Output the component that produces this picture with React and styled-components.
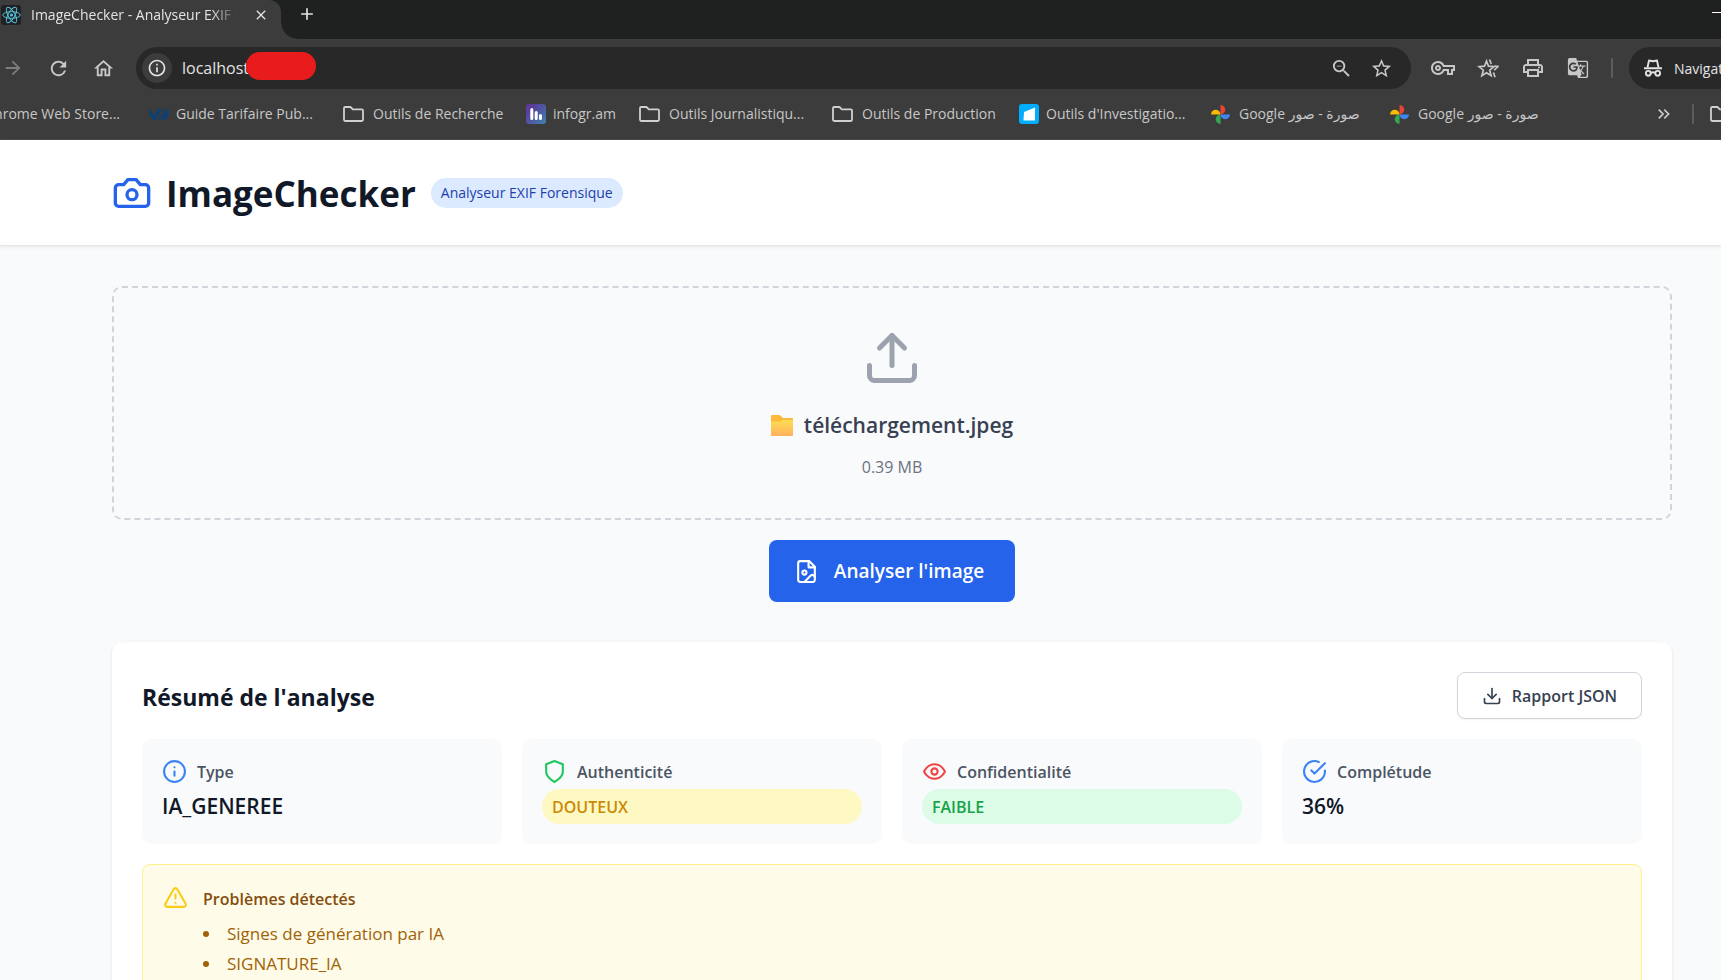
import React from "react";
import styled, { createGlobalStyle } from "styled-components";
import {
  MdArrowForward, MdRefresh, MdOutlineHome, MdOutlineInfo, MdZoomOut, MdStarOutline,
  MdOutlineVpnKey, MdOutlinePrint, MdGTranslate, MdClose, MdAdd, MdKeyboardDoubleArrowRight,
} from "react-icons/md";
import { Download, Upload } from "lucide-react";

const GlobalStyle = createGlobalStyle`
  *, *::before, *::after { box-sizing: border-box; }
  body {
    margin: 0;
    background: #f9fafb;
    font-family: "Open Sans", "Noto Sans", "DejaVu Sans", sans-serif;
    color: #111827;
  }
  h1, h2, h3, p, ul { margin: 0; padding: 0; }
  button, input { font: inherit; color: inherit; }
  button { padding: 0; border: 0; background: none; cursor: pointer; }
  svg { display: block; flex: none; }
`;

const Page = styled.div`
  height: 100vh;
  overflow: hidden;
`;

/* ---------- browser window ---------- */

const TabStrip = styled.div`
  display: flex;
  height: 39px;
  background: #1f2120;
  color: #e3e3e3;
`;

const Tab = styled.div`
  position: relative;
  display: flex;
  align-items: center;
  width: 281px;
  height: 39px;
  padding: 0 12px 10px 1px;
  background: #3c3c3c;
  border-top-right-radius: 12px;

  &::after {
    content: "";
    position: absolute;
    left: 100%;
    bottom: 0;
    width: 16px;
    height: 16px;
    background: radial-gradient(circle at 100% 0, transparent 15px, #3c3c3c 16px);
  }
`;

const Favicon = styled.span`
  display: grid;
  place-items: center;
  width: 20px;
  height: 20px;
  border-radius: 3px;
  background: #202124;
`;

const TabTitle = styled.span`
  flex: 1;
  margin: 0 16px 0 10px;
  overflow: hidden;
  white-space: nowrap;
  font-size: 14px;
  line-height: 20px;
  mask-image: linear-gradient(to right, #000 88%, transparent 100%);
`;

const StripButton = styled.button`
  display: grid;
  place-items: center;
  width: 16px;
  height: 28px;
`;

const NewTab = styled(StripButton)`
  width: 52px;
`;

const Minimise = styled(StripButton)`
  width: 9px;
  height: 24px;
  margin-left: auto;

  &::after {
    content: "";
    width: 9px;
    height: 1px;
    background: #fff;
  }
`;

const Toolbar = styled.div`
  display: flex;
  align-items: center;
  height: 50px;
  padding-top: 8px;
  background: #3c3c3c;
  color: #c7c7c7;
`;

const NavButtons = styled.div`
  display: flex;
  gap: 21px;
  width: 136px;
  padding-left: 1px;
`;

const IconButton = styled.button`
  display: grid;
  place-items: center;
  flex: none;
  width: 24px;
  height: 24px;
  color: ${(p) => (p.$dim ? "#7d7d7d" : "#c7c7c7")};
`;

const Omnibox = styled.div`
  position: relative;
  display: flex;
  align-items: center;
  flex: 1;
  gap: 16px;
  height: 42px;
  padding: 0 18px 0 6px;
  border-radius: 21px;
  background: #282828;
`;

const SiteInfo = styled.button`
  display: grid;
  place-items: center;
  width: 30px;
  height: 30px;
  margin-right: -6px;
  border-radius: 50%;
  background: #3c3c3c;
  color: #e3e3e3;
`;

const Address = styled.input`
  flex: 1;
  min-width: 0;
  padding: 0;
  border: 0;
  outline: 0;
  background: none;
  color: #e3e3e3;
  font-size: 16px;
  line-height: 24px;
`;

const Redaction = styled.span`
  position: absolute;
  top: 5px;
  left: 110px;
  width: 70px;
  height: 28px;
  border-radius: 14px;
  background: #e81c1c;
`;

const Extensions = styled.div`
  display: flex;
  align-items: center;
  gap: 21px;
  padding: 0 16px 0 20px;
`;

const Divider = styled.span`
  flex: none;
  width: 2px;
  height: 20px;
  border-radius: 1px;
  background: #5c5c5c;
`;

const Incognito = styled.button`
  display: flex;
  align-items: center;
  gap: 11px;
  width: 92px;
  height: 42px;
  padding-left: 14px;
  overflow: hidden;
  border-radius: 21px 0 0 21px;
  background: #282828;
  color: #e3e3e3;
  font-size: 14px;
  white-space: nowrap;
`;

const BookmarksBar = styled.nav`
  display: flex;
  align-items: center;
  height: 51px;
  border-bottom: 1px solid #4b4b4b;
  overflow: hidden;
  background: #3c3c3c;
  color: #c7c7c7;
`;

const Bookmark = styled.a`
  display: flex;
  align-items: center;
  flex: none;
  gap: ${(p) => p.$gap || 7}px;
  width: ${(p) => p.$slot}px;
  color: inherit;
  font-size: 14px;
  line-height: 20px;
  text-decoration: none;
  white-space: nowrap;
`;

const CutBookmark = styled(Bookmark)`
  justify-content: flex-end;
  padding-right: 29px;
`;

const BookmarksEnd = styled.div`
  display: flex;
  align-items: center;
  gap: 16px;
  width: 69px;
  margin-left: auto;
  overflow: hidden;
`;

/* ---------- application ---------- */

const Header = styled.header`
  display: flex;
  align-items: center;
  height: 106px;
  padding: 0 49px 0 112px;
  border-bottom: 1px solid #e5e7eb;
  background: #fff;
  box-shadow: 0 1px 3px rgba(0, 0, 0, 0.08);
`;

const Brand = styled.h1`
  margin: 0 15px 0 14px;
  padding-top: 2px;
  font-size: 35px;
  font-weight: 700;
  line-height: 44px;
`;

const Tag = styled.span`
  padding: 0 10px;
  border-radius: 15px;
  background: #dbeafe;
  color: #1e40af;
  font-size: 14px;
  line-height: 30px;
`;

const Main = styled.main`
  display: flex;
  flex-direction: column;
  align-items: center;
  padding: 40px 49px 0 112px;
`;

const DropZone = styled.label`
  display: flex;
  flex-direction: column;
  align-items: center;
  width: 100%;
  height: 234px;
  padding-top: 40px;
  border: 2px dashed #d1d5db;
  border-radius: 10px;
  cursor: pointer;
`;

const FileInput = styled.input`
  position: absolute;
  width: 1px;
  height: 1px;
  opacity: 0;
`;

const FileName = styled.span`
  display: flex;
  align-items: center;
  gap: 11px;
  margin-top: 20px;
  color: #374151;
  font-size: 21px;
  font-weight: 600;
  line-height: 35px;
`;

const FileSize = styled.span`
  margin-top: 10px;
  color: #6b7280;
  font-size: 16px;
  line-height: 28px;
`;

const AnalyseButton = styled.button`
  display: flex;
  align-items: center;
  gap: 15px;
  height: 62px;
  margin: 20px 0 40px;
  padding: 0 31px 0 25px;
  border-radius: 8px;
  background: #2563eb;
  color: #fff;
  font-size: 19px;
  font-weight: 600;
`;

const Card = styled.section`
  width: 100%;
  padding: 30px;
  border-radius: 10px;
  background: #fff;
  box-shadow: 0 1px 3px rgba(0, 0, 0, 0.1);
`;

const CardHead = styled.div`
  display: flex;
  align-items: center;
  justify-content: space-between;
  height: 47px;
`;

const CardTitle = styled.h2`
  padding-top: 2px;
  font-size: 23px;
  font-weight: 700;
  line-height: 36px;
`;

const ReportButton = styled.button`
  display: flex;
  align-items: center;
  justify-content: center;
  gap: 10px;
  min-width: 185px;
  height: 47px;
  border: 1px solid #d1d5db;
  border-radius: 8px;
  background: #fff;
  box-shadow: 0 1px 2px rgba(0, 0, 0, 0.05);
  color: #374151;
  font-size: 16px;
  font-weight: 600;
`;

const Tiles = styled.div`
  display: grid;
  grid-template-columns: repeat(4, 1fr);
  gap: 20px;
  margin: 20px 0;
`;

const Tile = styled.div`
  height: 105px;
  padding: 20px;
  border-radius: 10px;
  background: #f9fafb;
`;

const TileLabel = styled.div`
  display: flex;
  gap: 10px;
  height: 25px;
  color: #4b5563;
  font-size: 16px;
  font-weight: 600;
  line-height: 27px;
`;

const TileValue = styled.p`
  margin-top: 5px;
  font-size: 21px;
  font-weight: 600;
  line-height: 35px;
`;

const TONES = {
  yellow: { ink: "#ca8a04", fill: "#fef9c3" },
  green: { ink: "#16a34a", fill: "#dcfce7" },
};

const Pill = styled.p`
  margin-top: 5px;
  padding: 1px 10px 0;
  border-radius: 18px;
  background: ${(p) => TONES[p.$tone].fill};
  color: ${(p) => TONES[p.$tone].ink};
  font-size: 16px;
  font-weight: 600;
  line-height: 34px;
`;

const Alert = styled.div`
  display: flex;
  gap: 15px;
  padding: 20px;
  border: 1px solid #fef08a;
  border-radius: 8px;
  background: #fefce8;
`;

const AlertTitle = styled.h3`
  color: #854d0e;
  font-size: 16px;
  font-weight: 600;
  line-height: 28px;
`;

const IssueList = styled.ul`
  margin-top: 6px;
  color: #a16207;
  font-size: 17px;
  line-height: 30px;
  list-style: none;
`;

const Issue = styled.li`
  display: flex;
  align-items: center;
  gap: 18px;

  &::before {
    content: "";
    width: 6px;
    height: 6px;
    border-radius: 50%;
    background: currentColor;
  }
`;

/* ---------- drawings ---------- */

const Stroke = ({ size = 25, color = "currentColor", children }) => (
  <svg width={size} height={size} viewBox="0 0 24 24" fill="none" stroke={color}
    strokeWidth="2" strokeLinecap="round" strokeLinejoin="round" aria-hidden="true">
    {children}
  </svg>
);

const CameraIcon = () => (
  <Stroke size={40} color="#2563eb">
    <path d="M14.5 4h-5L7 7H4a2 2 0 0 0-2 2v9a2 2 0 0 0 2 2h16a2 2 0 0 0 2-2V9a2 2 0 0 0-2-2h-3l-2.5-3z" />
    <circle cx="12" cy="13" r="3" />
  </Stroke>
);

const FileImageIcon = () => (
  <Stroke>
    <path d="M14.5 2H6a2 2 0 0 0-2 2v16a2 2 0 0 0 2 2h12a2 2 0 0 0 2-2V7.5L14.5 2z" />
    <path d="M14 2v6h6" />
    <circle cx="10" cy="13" r="2" />
    <path d="m20 17-1.09-1.09a2 2 0 0 0-2.82 0L10 22" />
  </Stroke>
);

const InfoIcon = () => (
  <Stroke color="#3b82f6">
    <circle cx="12" cy="12" r="10" />
    <path d="M12 16v-4M12 8h.01" />
  </Stroke>
);

const ShieldIcon = () => (
  <Stroke color="#22c55e">
    <path d="M12 22s8-4 8-10V5l-8-3-8 3v7c0 6 8 10 8 10" />
  </Stroke>
);

const EyeIcon = () => (
  <Stroke color="#ef4444">
    <path d="M2 12s3-7 10-7 10 7 10 7-3 7-10 7-10-7-10-7Z" />
    <circle cx="12" cy="12" r="3" />
  </Stroke>
);

const CheckIcon = () => (
  <Stroke color="#3b82f6">
    <path d="M22 11.08V12a10 10 0 1 1-5.93-9.14" />
    <path d="m9 11 3 3L22 4" />
  </Stroke>
);

const WarningIcon = () => (
  <Stroke color="#facc15">
    <path d="m21.73 18-8-14a2 2 0 0 0-3.48 0l-8 14A2 2 0 0 0 4 21h16a2 2 0 0 0 1.73-3Z" />
    <path d="M12 9v4M12 17h.01" />
  </Stroke>
);

const YellowFolder = () => (
  <svg width="22" height="21" viewBox="0 0 22 21" aria-hidden="true">
    <defs>
      <linearGradient id="folder" x1="0" y1="0" x2="0" y2="1">
        <stop offset="0" stopColor="#ffdc52" />
        <stop offset="1" stopColor="#ffb160" />
      </linearGradient>
    </defs>
    <path d="M0 1q0-1 1-1h7q1 0 2 1l2 2h9q1 0 1 1v8H0z" fill="#fdb93a" />
    <path d="M0 6.500h9l2-1.500h10q1 0 1 1v14q0 1-1 1H1q-1 0-1-1z" fill="url(#folder)" />
  </svg>
);

const FolderOutline = () => (
  <svg width="21" height="16" viewBox="0 0 21 16" fill="none" stroke="#d0d0d0" strokeWidth="1.800" strokeLinejoin="round" aria-hidden="true">
    <path d="M1 2.200Q1 1 2.200 1H7.500L9.800 3.300H18.800Q20 3.300 20 4.500V13.800Q20 15 18.800 15H2.200Q1 15 1 13.800Z" />
  </svg>
);

const ReactLogo = () => (
  <svg width="19" height="18" viewBox="-12 -11 24 22" fill="none" stroke="#58c4dc" strokeWidth="1.200" aria-hidden="true">
    <circle r="2" fill="#58c4dc" stroke="none" />
    <ellipse rx="11" ry="4.200" />
    <ellipse rx="11" ry="4.200" transform="rotate(60)" />
    <ellipse rx="11" ry="4.200" transform="rotate(120)" />
  </svg>
);

const OvhLogo = () => (
  <svg width="20" height="12" viewBox="0 0 20 12" fill="#123f6d" aria-hidden="true">
    <path d="M1.200 .5 5 7.200 8.800 .5h4.400L6.800 11.800H3.200Q-1.600 6.300 1.200 .5Z" />
    <path d="M18.700 .5q2.900 5.800-1.600 11.300h-4.500l1.800-3.200h-2.800L16 .8l1.100 1.900Z" />
    <path d="M10.300 8.800h3.200l-1.700 3H8.600Z" />
  </svg>
);

const InfogramLogo = () => (
  <svg width="20" height="20" viewBox="0 0 20 20" aria-hidden="true">
    <defs>
      <linearGradient id="infogram" x1="0" y1="0" x2="1" y2="1">
        <stop offset="0.200" stopColor="#5b3b9b" />
        <stop offset="1" stopColor="#3f83ae" />
      </linearGradient>
    </defs>
    <rect width="20" height="20" rx="3" fill="url(#infogram)" />
    <path d="M5.800 5.500v9M10.200 8.500v6M14.500 11.500v3" stroke="#fff" strokeWidth="3" strokeLinecap="round" />
  </svg>
);

const BlueLogo = () => (
  <svg width="20" height="20" viewBox="0 0 20 20" aria-hidden="true">
    <rect width="20" height="20" rx="3" fill="#00adff" />
    <path d="M5 8 16 3.500V16.500H4.500Z" fill="#fff" />
  </svg>
);

const PhotosLogo = () => (
  <svg width="19" height="19" viewBox="0 0 20 20" aria-hidden="true">
    <path d="M10 0a5 5 0 0 1 0 10Z" fill="#ea4335" />
    <path d="M20 10a5 5 0 0 1-10 0Z" fill="#4285f4" />
    <path d="M10 20a5 5 0 0 1 0-10Z" fill="#34a853" />
    <path d="M0 10a5 5 0 0 1 10 0Z" fill="#fbbc04" />
  </svg>
);

const ReadingStar = () => (
  <svg width="22" height="21" viewBox="0 0 22 21" fill="none" stroke="currentColor" strokeWidth="1.700" strokeLinejoin="miter" aria-hidden="true">
    <path d="m9.500 3 2 5.200 5.500.4-4.300 3.600 1.400 5.500-4.600-3-4.600 3 1.400-5.500L2 8.600l5.500-.4Z" />
    <path d="m12.500 1.500 1.800 4.500M17.500 8.200l3.500.3-3.800 3.600M16.500 14.500l1.500 4.700" />
  </svg>
);

const IncognitoIcon = () => (
  <svg width="20" height="18" viewBox="0 0 20 18" fill="none" stroke="currentColor" strokeWidth="1.900" aria-hidden="true">
    <path d="M1 9.200h18" />
    <path d="M4.500 8.500 6 1.500 10 2.300l4-.8 1.500 7" strokeLinejoin="round" />
    <circle cx="5.300" cy="14.300" r="2.400" />
    <circle cx="14.700" cy="14.300" r="2.400" />
    <path d="M7.700 13.800q2.300-1 4.600 0" />
  </svg>
);

/* ---------- content ---------- */

const BOOKMARKS = [
  { label: "Guide Tarifaire Pub...", icon: OvhLogo, slot: 194 },
  { label: "Outils de Recherche", icon: FolderOutline, slot: 183, gap: 9 },
  { label: "infogr.am", icon: InfogramLogo, slot: 113 },
  { label: "Outils Journalistiqu...", icon: FolderOutline, slot: 193, gap: 9 },
  { label: "Outils de Production", icon: FolderOutline, slot: 187, gap: 9 },
  { label: "Outils d'Investigatio...", icon: BlueLogo, slot: 192 },
  { label: "صورة - صور Google", icon: PhotosLogo, slot: 179, gap: 9, rtl: true },
  { label: "صورة - صور Google", icon: PhotosLogo, slot: 179, gap: 9, rtl: true },
];

const ISSUES = ["Signes de génération par IA", "SIGNATURE_IA"];

function BrowserChrome() {
  return (
    <div>
      <TabStrip>
        <Tab>
          <Favicon><ReactLogo /></Favicon>
          <TabTitle>ImageChecker - Analyseur EXIF Forensique</TabTitle>
          <StripButton aria-label="Fermer l'onglet"><MdClose size={16} /></StripButton>
        </Tab>
        <NewTab aria-label="Nouvel onglet"><MdAdd size={20} /></NewTab>
        <Minimise aria-label="Réduire" />
      </TabStrip>
      <Toolbar>
        <NavButtons>
          <IconButton $dim aria-label="Avancer"><MdArrowForward size={22} /></IconButton>
          <IconButton aria-label="Actualiser"><MdRefresh size={23} /></IconButton>
          <IconButton aria-label="Accueil"><MdOutlineHome size={23} /></IconButton>
        </NavButtons>
        <Omnibox>
          <SiteInfo aria-label="Informations sur le site"><MdOutlineInfo size={20} /></SiteInfo>
          <Address aria-label="Adresse" defaultValue="localhost" />
          <IconButton aria-label="Zoom"><MdZoomOut size={23} /></IconButton>
          <IconButton aria-label="Ajouter aux favoris"><MdStarOutline size={23} /></IconButton>
          <Redaction />
        </Omnibox>
        <Extensions>
          <IconButton aria-label="Mots de passe"><MdOutlineVpnKey size={24} /></IconButton>
          <IconButton aria-label="Favoris"><ReadingStar /></IconButton>
          <IconButton aria-label="Imprimer"><MdOutlinePrint size={24} /></IconButton>
          <IconButton aria-label="Traduire"><MdGTranslate size={22} /></IconButton>
          <Divider />
        </Extensions>
        <Incognito><IncognitoIcon />Navigation privée</Incognito>
      </Toolbar>
      <BookmarksBar>
        <CutBookmark href="#" $slot={149}>Chrome Web Store...</CutBookmark>
        {BOOKMARKS.map(({ label, icon: Icon, slot, gap, rtl }, i) => (
          <Bookmark key={i} href="#" $slot={slot} $gap={gap}>
            <Icon />
            <span dir={rtl ? "rtl" : "ltr"}>{label}</span>
          </Bookmark>
        ))}
        <BookmarksEnd>
          <IconButton aria-label="Autres favoris"><MdKeyboardDoubleArrowRight size={20} /></IconButton>
          <Divider />
          <FolderOutline />
        </BookmarksEnd>
      </BookmarksBar>
    </div>
  );
}

export default function App() {
  return (
    <Page>
      <GlobalStyle />
      <BrowserChrome />
      <Header>
        <CameraIcon />
        <Brand>ImageChecker</Brand>
        <Tag>Analyseur EXIF Forensique</Tag>
      </Header>
      <Main>
        <DropZone>
          <FileInput type="file" accept="image/*" />
          <Upload size={60} color="#9ca3af" />
          <FileName><YellowFolder />téléchargement.jpeg</FileName>
          <FileSize>0.39 MB</FileSize>
        </DropZone>
        <AnalyseButton><FileImageIcon />Analyser l'image</AnalyseButton>
        <Card>
          <CardHead>
            <CardTitle>Résumé de l'analyse</CardTitle>
            <ReportButton><Download size={20} />Rapport JSON</ReportButton>
          </CardHead>
          <Tiles>
            <Tile>
              <TileLabel><InfoIcon />Type</TileLabel>
              <TileValue>IA_GENEREE</TileValue>
            </Tile>
            <Tile>
              <TileLabel><ShieldIcon />Authenticité</TileLabel>
              <Pill $tone="yellow">DOUTEUX</Pill>
            </Tile>
            <Tile>
              <TileLabel><EyeIcon />Confidentialité</TileLabel>
              <Pill $tone="green">FAIBLE</Pill>
            </Tile>
            <Tile>
              <TileLabel><CheckIcon />Complétude</TileLabel>
              <TileValue>36%</TileValue>
            </Tile>
          </Tiles>
          <Alert>
            <WarningIcon />
            <div>
              <AlertTitle>Problèmes détectés</AlertTitle>
              <IssueList>
                {ISSUES.map((issue) => <Issue key={issue}>{issue}</Issue>)}
              </IssueList>
            </div>
          </Alert>
        </Card>
      </Main>
    </Page>
  );
}
